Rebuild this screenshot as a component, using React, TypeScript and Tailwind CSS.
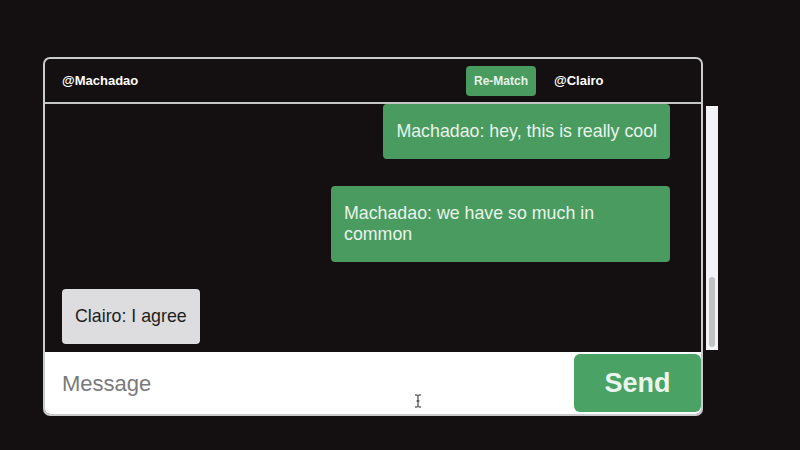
import React from 'react';

const font = { fontFamily: '"Liberation Sans", Arial, sans-serif' };

type Msg = { from: 'me' | 'them'; text: React.ReactNode; width?: string };

const messages: Msg[] = [
  { from: 'me', text: 'Machadao: hey, this is really cool' },
  {
    from: 'me',
    text: (
      <>
        Machadao: we have so much in
        <br />
        common
      </>
    ),
    width: 'w-[339px]',
  },
  { from: 'them', text: 'Clairo: I agree' },
];

const Bubble: React.FC<{ msg: Msg }> = ({ msg }) => {
  const mine = msg.from === 'me';
  return (
    <div className={mine ? 'flex justify-end' : 'flex justify-start'}>
      <div
        className={
          (mine ? 'bg-[#4a9b60] text-[#e8f4ea]' : 'bg-[#dddcdf] text-[#1e1e1e]') +
          ' rounded-[4px] px-[13px] py-[17px] text-[17.8px] leading-[21px] ' +
          (msg.width ?? '')
        }
      >
        {msg.text}
      </div>
    </div>
  );
};

export default function App() {
  return (
    <div className="w-[800px] h-[450px] bg-[#141011] pt-[57px] pl-[43px] overflow-hidden" style={font}>
      <div className="flex items-start">
        <div className="w-[660px] border-2 border-[#cbcbcb] rounded-[7px] bg-[#141011] flex flex-col">
          {/* header */}
          <div className="h-[45px] border-b-2 border-[#c4c4c4] flex items-center pl-[17px]">
            <span className="text-white font-bold text-[13px]">@Machadao</span>
            <div className="flex-1" />
            <div className="w-[235px] flex items-center gap-[18px]">
              <button className="w-[70px] h-[30px] rounded-[4px] bg-[#4a9b60] text-[#e6f3e9] font-bold text-[12px]">
                Re-Match
              </button>
              <span className="text-white font-bold text-[13px]">@Clairo</span>
            </div>
          </div>

          {/* messages */}
          <div className="h-[248px] overflow-hidden flex flex-col justify-end gap-[27px] pl-[17px] pr-[31px] pb-[8px]">
            {messages.map((m, i) => (
              <Bubble key={i} msg={m} />
            ))}
          </div>

          {/* input */}
          <div className="h-[62px] bg-white rounded-b-[5px] flex items-stretch relative">
            <div className="flex-1 flex items-center pl-[17px] text-[22px] text-[#7a7a7a]">Message</div>
            <svg className="absolute left-[369px] top-[42px]" width="8" height="14" viewBox="0 0 8 14">
              <path d="M1 1h2.5l0.5 0.5l0.5-0.5H7M4 1.5v11M1 13h2.5l0.5-0.5l0.5 0.5H7M2.5 7h3" stroke="#222" strokeWidth="1" fill="none" />
            </svg>
            <button className="w-[127px] my-[2px] rounded-[6px] bg-[#4aa365] text-[#eaf6ec] font-bold text-[27px]">
              Send
            </button>
          </div>
        </div>

        {/* scrollbar */}
        <div className="mt-[49px] ml-[3px] w-[12px] h-[244px] bg-[#f3f2f6] flex flex-col justify-end px-[3px] pb-[3px]">
          <div className="h-[70px] rounded-full bg-[#c2c2c4]" />
        </div>
      </div>
    </div>
  );
}
